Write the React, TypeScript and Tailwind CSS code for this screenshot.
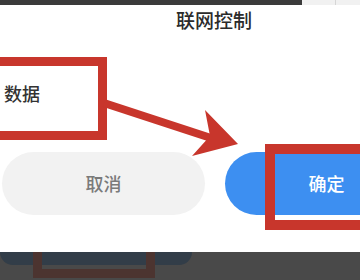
function Arrow() {
  return (
    <svg
      className="absolute left-0 top-0 pointer-events-none"
      width={360}
      height={280}
      viewBox="0 0 360 280"
    >
      <line x1={104} y1={103} x2={214} y2={139} stroke="#c8362c" strokeWidth={8} />
      <polygon points="205,110 238,144 192,156 210,136" fill="#c8362c" />
    </svg>
  );
}

export default function App() {
  return (
    <div className="relative w-[360px] h-[280px] overflow-hidden bg-white flex flex-col font-['Noto_Sans_CJK_SC','Noto_Sans',sans-serif]">
      {/* status strip */}
      <div className="flex h-[5px] shrink-0">
        <div className="w-[302px] bg-[#3b3b3b]" />
        <div className="w-[34px] bg-[#f1f1f1] border-r border-[#d6d6d6]" />
        <div className="flex-1 bg-[#f1f1f1]" />
      </div>

      <div className="h-[40px] shrink-0 pt-[3px] pl-[176px]">
        <h1 className="text-[19px] leading-[24px] font-medium text-[#2b2b2b]">联网控制</h1>
      </div>

      <div className="h-[107px] shrink-0 pt-[36px] pl-[4px]">
        <p className="text-[18px] leading-[24px] font-medium text-[#333]">数据</p>
      </div>

      <div className="flex h-[63px] shrink-0 gap-[20px] pl-[2px]">
        <button
          type="button"
          className="w-[203px] shrink-0 rounded-full bg-[#f2f2f2] text-[18px] font-medium text-[#7a7a7a]"
        >
          取消
        </button>
        <button
          type="button"
          className="w-[203px] shrink-0 rounded-full bg-[#3d8ff1] text-[18px] font-medium text-white"
        >
          确定
        </button>
      </div>

      <div className="h-[37px] shrink-0" />

      <div className="flex-1 bg-[#494949]">
        <div className="w-[192px] h-[13px] bg-[#323d48] rounded-b-[14px]" />
      </div>

      {/* annotation boxes */}
      <div className="absolute left-[-12px] top-[57px] w-[119px] h-[83px] border-[9px] border-[#c8362c]" />
      <div className="absolute left-[265px] top-[144px] w-[120px] h-[86px] border-[10px] border-[#c8362c]" />
      <div className="absolute left-[33px] top-[252px] w-[122px] h-[26px] border-[9px] border-t-0 border-[#4c3430]" />

      <Arrow />
    </div>
  );
}
